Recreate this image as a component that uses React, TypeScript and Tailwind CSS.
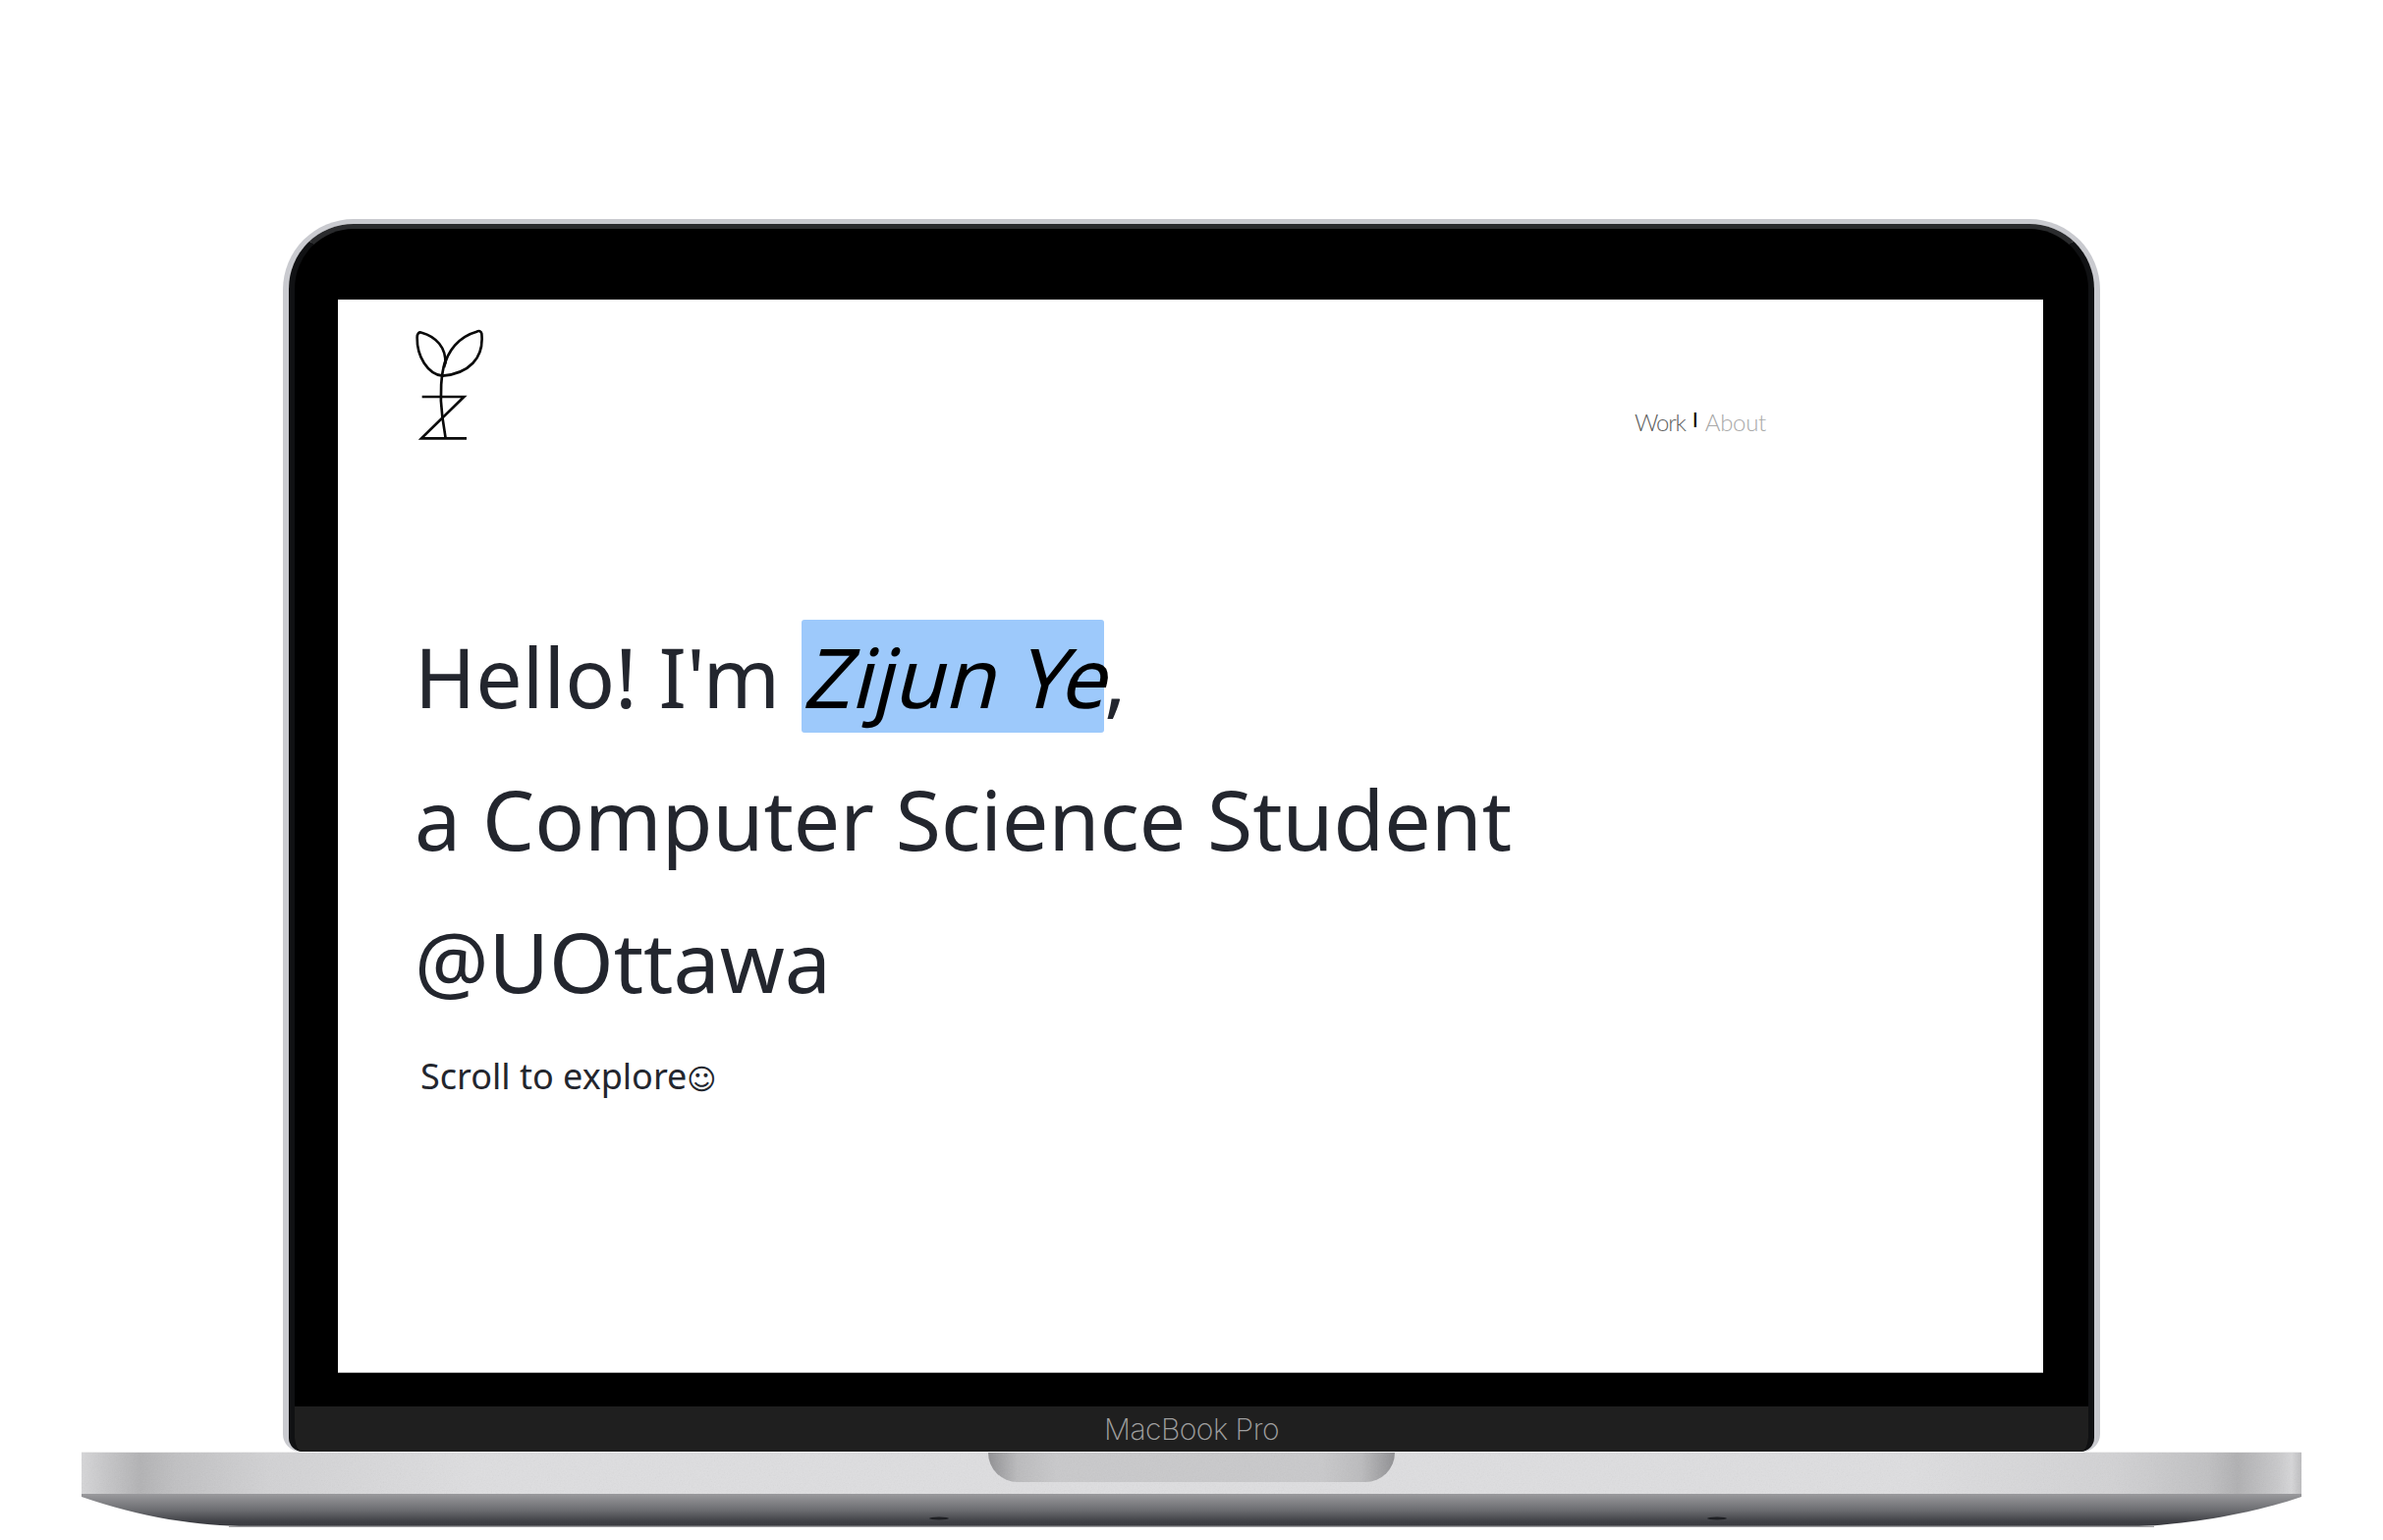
export default function App() {
  return (
    <div className="flex h-[1568px] w-[2426px] flex-col items-center overflow-hidden bg-white pt-[223px] font-['Noto_Sans','DejaVu_Sans',sans-serif]">
      <div className="h-[1255px] w-[1850px] shrink-0 rounded-t-[72px] rounded-b-[18px] border-x-[6px] border-t-[5px] border-[#c9cacf]">
        <div className="flex h-full flex-col overflow-hidden rounded-t-[66px] rounded-b-[14px] border-x-[6px] border-t-[5px] border-x-[#101113] border-t-[#2a2b2d] bg-black">
          <div className="flex-1 pt-[72px] pl-[44px]">
            <div className="h-[1093px] w-[1736px] border-b border-[#aaaaaa] bg-white">
              <header className="flex items-end justify-between pt-[30px] pr-[282px] pl-[78px]">
                <svg className="h-[113px] w-[70px]" viewBox="455 372 210 339" fill="none" stroke="#0a0a0a" strokeWidth="8">
                  <path d="M541 515C495 510 462 455 463 398C463 387 468 380 477 383C520 395 552 428 549 478" />
                  <path d="M541 515C620 508 668 462 660 386C658 378 652 376 645 380C590 395 555 440 545 490" />
                  <path d="M548 472C538 505 530 570 540 640L550 706" />
                  <path d="M478 579H606L476 706H614" />
                </svg>
                <nav className="-mb-[1px] flex items-baseline font-['Lato',sans-serif] text-[24px] leading-[36px] font-light">
                  <span className="tracking-[-1.2px] text-[#5f5f5f]">Work</span>
                  <span className="mr-[7px] ml-[7px] -translate-y-[4px] text-[22px] font-normal text-black">I</span>
                  <span className="tracking-[-0.3px] text-[#a9a9a9]">About</span>
                </nav>
              </header>
              <main className="pt-[168px] pl-[78px] text-[#23262e]">
                <h1 className="text-[84.1px] leading-[145px] font-normal">
                  <div>
                    Hello! I'm{" "}
                    <span className="rounded-[3px] bg-[#9dc9fb] text-black">
                      <span className="inline-block origin-[0_78%] -skew-x-[14deg] leading-normal">Zijun Ye</span>
                    </span>
                    ,
                  </div>
                  <div>a Computer Science Student</div>
                  <div>@UOttawa</div>
                </h1>
                <p className="mt-[19px] ml-[6px] text-[36px] leading-[52px]">
                  Scroll to explore<span className="text-[29px]">☺</span>
                </p>
              </main>
            </div>
          </div>
          <div className="flex h-[46px] shrink-0 items-center justify-center bg-[#1f1f1f] font-['Inter',sans-serif] text-[30px] font-extralight tracking-[-0.5px] text-[#a0a0a0]">
            MacBook Pro
          </div>
        </div>
      </div>
      <div className="relative flex h-[43px] w-[2260px] shrink-0 justify-center border-t border-[#efefef] bg-[linear-gradient(90deg,#d6d6d8_0px,#c6c6c8_25px,#b2b2b4_60px,#c0c0c2_95px,#d2d2d4_190px,#dedee0_400px,#dedee0_1860px,#d2d2d4_2070px,#c0c0c2_2165px,#b0b0b2_2195px,#c8c8ca_2235px,#d6d6d8_2250px,#bdbdbf_2260px)]">
        <div className="h-[30px] w-[414px] rounded-b-[32px] bg-[linear-gradient(90deg,#8f8f92_0px,#bbbbbd_30px,#c9c9cb_70px,#c9c9cb_340px,#bbbbbd_380px,#8f8f92_414px)]" />
        <svg className="pointer-events-none absolute inset-0 h-full w-full opacity-[0.12]">
          <filter id="grain">
            <feTurbulence type="fractalNoise" baseFrequency="0.7" numOctaves="2" />
            <feColorMatrix type="saturate" values="0" />
          </filter>
          <rect width="100%" height="100%" filter="url(#grain)" />
        </svg>
      </div>
      <svg className="h-[34px] w-[2260px] shrink-0" viewBox="0 0 2260 34">
        <defs>
          <linearGradient id="under" x1="0" y1="0" x2="0" y2="1">
            <stop offset="0" stopColor="#9a9a9d" />
            <stop offset="0.5" stopColor="#6c6d71" />
            <stop offset="0.85" stopColor="#404146" />
            <stop offset="1" stopColor="#38393e" />
          </linearGradient>
        </defs>
        <path d="M0 0H2260V3C2200 24 2120 33 2090 33H170C120 33 60 24 0 3Z" fill="url(#under)" />
        <rect x="150" y="32.6" width="1960" height="1.4" fill="#a0a0a2" />
        <ellipse cx="873" cy="25" rx="10" ry="1.5" fill="#1f2024" />
        <ellipse cx="1665" cy="25" rx="10" ry="1.5" fill="#1f2024" />
      </svg>
    </div>
  );
}
